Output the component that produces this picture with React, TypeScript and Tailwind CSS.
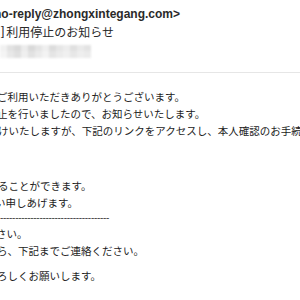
import React from "react";

const mosaicTop = ["#f1f1f1", "#e2e2e2", "#dadada", "#ececec", "#d9d9d9", "#e4e4e4", "#efefef", "#dcdcdc", "#e6e6e6", "#ededed", "#e0e0e0", "#eaeaea", "#e3e3e3"];
const mosaicBot = ["#f4f4f4", "#e8e8e8", "#e0e0e0", "#efefef", "#e2e2e2", "#ebebeb", "#f3f3f3", "#e5e5e5", "#ececec", "#f0f0f0", "#e7e7e7", "#eeeeee", "#ebebeb"];

const jp = { fontFamily: '"Noto Sans CJK JP", "Noto Sans", sans-serif' } as const;

export default function App() {
  return (
    <div className="w-[300px] h-[300px] overflow-hidden bg-white whitespace-nowrap text-[#1c1c1c]">
      <div className="pt-[6px]">
        <div
          className="ml-[-6px] h-[16px] leading-[16px] text-[12px] font-bold text-[#2a2a2a]"
          style={{ fontFamily: '"Liberation Sans", Arial, sans-serif' }}
        >
          no-reply@zhongxintegang.com&gt;
        </div>
        <div className="h-[19px] leading-[19px] text-[12px] flex items-center text-[#2a2a2a]">
          <span className="ml-[1px]" style={{ fontFamily: '"Liberation Sans", Arial, sans-serif' }}>]</span>
          <span className="ml-[2px]" style={jp}>利用停止のお知らせ</span>
        </div>
        <div className="mt-[4px] h-[13px] w-[93px] flex flex-col blur-[1px]">
          <div className="flex h-[6px]">
            {mosaicTop.map((c, i) => (
              <div key={i} className="w-[7px] h-full" style={{ backgroundColor: c }} />
            ))}
          </div>
          <div className="flex h-[7px]">
            {mosaicBot.map((c, i) => (
              <div key={i} className="w-[7px] h-full" style={{ backgroundColor: c }} />
            ))}
          </div>
        </div>
      </div>
      <div className="mt-[14px] h-px bg-[#e6e6e6]" />
      <div className="pt-[15px] text-[10.5px] leading-[17px]" style={jp}>
        <div className="ml-[-3px]">ご利用いただきありがとうございます。</div>
        <div className="ml-[-3px]">止を行いましたので、お知らせいたします。</div>
        <div className="ml-[-2px]">けいたしますが、下記のリンクをアクセスし、本人確認のお手続きをお願いいたします。</div>
        <div className="h-[38px]" />
        <div className="ml-[-2px]">ることができます。</div>
        <div className="ml-[-5px]">い申しあげます。</div>
        <div
          className="h-[14px] leading-[14px] text-[10px] tracking-[-0.3px] text-[#444]"
          style={{ fontFamily: '"Liberation Sans", Arial, sans-serif' }}
        >
          ------------------------------------
        </div>
        <div className="ml-[-4px]">さい。</div>
        <div className="ml-[-3px]">ら、下記までご連絡ください。</div>
        <div className="h-[8px]" />
        <div className="ml-[-3px]">ろしくお願いします。</div>
      </div>
    </div>
  );
}
